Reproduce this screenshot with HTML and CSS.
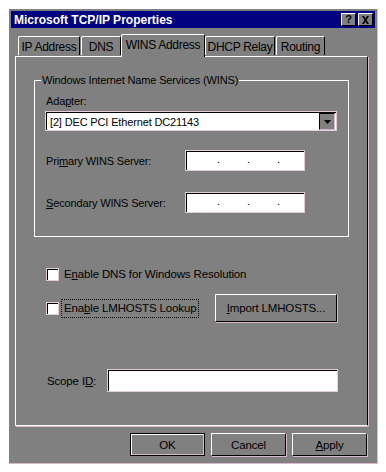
FILE: index.html
```html
<!DOCTYPE html>
<html lang="en">
  <head>
    <meta charset="UTF-8" />
    <title>Microsoft TCP/IP Properties</title>
    <link rel="stylesheet" href="styles.css">
  </head>
  <body>
    <div class="window">
      <div class="titlebar">
        <span class="title">Microsoft TCP/IP Properties</span>
        <div class="caption-btns">
          <span class="cap-btn">?</span>
          <span class="cap-btn">
            <svg width="9" height="8" viewBox="0 0 9 8">
              <path d="M1 0h2l1.5 2.5L6 0h2L5.5 4 8 8H6L4.5 5.5 3 8H1l2.5-4z" fill="#000" />
            </svg>
          </span>
        </div>
      </div>

      <div class="tabs">
        <div class="tab tab-ip">IP Address</div>
        <div class="tab tab-dns">DNS</div>
        <div class="tab tab-wins active">WINS Address</div>
        <div class="tab tab-dhcp">DHCP Relay</div>
        <div class="tab tab-routing">Routing</div>
      </div>

      <div class="panel">
        <div class="group">
          <span class="legend">Windows Internet Name Services (WINS)</span>
          <div class="field-label">Ada<u>p</u>ter:</div>
          <div class="select">
            <span class="select-text">[2] DEC PCI Ethernet DC21143</span>
            <span class="drop-btn">
              <svg width="7" height="4" viewBox="0 0 7 4">
                <path d="M0 0h7L3.5 4z" fill="#000" />
              </svg>
            </span>
          </div>
          <div class="server-row first">
            <span class="server-label">Pri<u>m</u>ary WINS Server:</span>
            <div class="ip-box">
              <span class="dot">.</span><span class="dot">.</span><span class="dot">.</span>
            </div>
          </div>
          <div class="server-row">
            <span class="server-label"><u>S</u>econdary WINS Server:</span>
            <div class="ip-box">
              <span class="dot">.</span><span class="dot">.</span><span class="dot">.</span>
            </div>
          </div>
        </div>

        <div class="check-row dns-row">
          <span class="checkbox"></span>
          <span class="check-label">E<u>n</u>able DNS for Windows Resolution</span>
        </div>
        <div class="check-row lmhosts-row">
          <div class="check-cell">
            <span class="checkbox"></span>
            <span class="check-label focus">Ena<u>b</u>le LMHOSTS Lookup</span>
          </div>
          <span class="btn import-btn"><u>I</u>mport LMHOSTS...</span>
        </div>

        <div class="scope-row">
          <span class="scope-label">Scope I<u>D</u>:</span>
          <div class="scope-box"></div>
        </div>
      </div>

      <div class="footer">
        <span class="btn footer-btn default">OK</span>
        <span class="btn footer-btn">Cancel</span>
        <span class="btn footer-btn"><u>A</u>pply</span>
      </div>
    </div>
  </body>
</html>
```

FILE: styles.css
```css
body {
  margin: 0;
  background: #fff;
  font-family: "Liberation Sans", Arial, sans-serif;
  font-size: 11px;
  letter-spacing: -0.15px;
  color: #000;
}
u {
  text-decoration: underline;
  text-underline-offset: 1px;
}
.window {
  margin: 9px 0 0 9px;
  width: 369px;
  height: 455px;
  box-sizing: border-box;
  background: #808080;
  border-right: 1px solid #d8b8cc;
  border-bottom: 1px solid #d8b8cc;
  display: flex;
  flex-direction: column;
}
.titlebar {
  margin: 2px 2px 0 2px;
  height: 17px;
  background: #000080;
  display: flex;
  align-items: center;
  justify-content: space-between;
  padding: 0 2px 0 3px;
}
.title {
  color: #fff;
  font-weight: bold;
  font-size: 12px;
  letter-spacing: 0;
}
.caption-btns {
  display: flex;
  gap: 2px;
}
.cap-btn {
  width: 15px;
  height: 13px;
  box-sizing: border-box;
  background: #808080;
  border-top: 1px solid #fff;
  border-left: 1px solid #fff;
  border-right: 1px solid #000;
  border-bottom: 1px solid #000;
  display: flex;
  align-items: center;
  justify-content: center;
  font-weight: bold;
  font-size: 11px;
  line-height: 1;
}
.tabs {
  margin: 6px 0 0 9px;
  height: 22px;
  display: flex;
  align-items: flex-end;
  position: relative;
  z-index: 1;
}
.tab {
  height: 19px;
  box-sizing: border-box;
  border-top: 1px solid #fff;
  border-left: 1px solid #fff;
  border-right: 1px solid #000;
  border-radius: 2px 2px 0 0;
  font-size: 12px;
  letter-spacing: -0.3px;
  display: flex;
  align-items: center;
  justify-content: center;
  padding-top: 2px;
  margin-bottom: 1px;
}
.tab-ip { width: 62px; }
.tab-dns { width: 40px; margin-left: 1px; }
.tab-wins { width: 84px; }
.tab-dhcp { width: 70px; }
.tab-routing { width: 49px; margin-left: 1px; }
.tab.active {
  height: 23px;
  margin-bottom: -1px;
  background: #808080;
  padding-top: 0;
  padding-bottom: 3px;
}
.panel {
  margin-left: 6px;
  width: 353px;
  height: 370px;
  box-sizing: border-box;
  border-top: 1px solid #fff;
  border-left: 1px solid #fff;
  border-right: 1px solid #000;
  border-bottom: 1px solid #fff;
  box-shadow: 1px 1px 0 #d8b8cc;
  padding: 23px 0 0 18px;
  display: flex;
  flex-direction: column;
}
.group {
  position: relative;
  width: 315px;
  height: 157px;
  box-sizing: border-box;
  border: 1px solid #fff;
  padding: 14px 0 0 10px;
}
.legend {
  position: absolute;
  top: -7px;
  left: 6px;
  padding: 0 1px;
  background: #808080;
  line-height: 13px;
}
.field-label {
  line-height: 13px;
  margin-left: 1px;
}
.select {
  margin-top: 3px;
  width: 292px;
  height: 20px;
  box-sizing: border-box;
  background: #fff;
  border: 1px solid #e4ccdc;
  box-shadow: inset 1px 1px 0 #000;
  display: flex;
  align-items: center;
  justify-content: space-between;
  padding: 1px 1px 0 4px;
}
.drop-btn {
  width: 16px;
  height: 17px;
  box-sizing: border-box;
  background: #808080;
  border: 1px solid #000;
  border-right-color: #d8b8cc;
  border-bottom-color: #d8b8cc;
  display: flex;
  align-items: center;
  justify-content: center;
}
.server-row {
  display: flex;
  align-items: center;
  margin-top: 21px;
}
.server-row.first {
  margin-top: 19px;
}
.server-label {
  width: 139px;
  margin-left: 1px;
}
.ip-box {
  width: 120px;
  height: 21px;
  box-sizing: border-box;
  background: #fff;
  border: 1px solid #e4ccdc;
  box-shadow: inset 1px 1px 0 #000;
  display: flex;
  padding: 2px 0 0 31px;
  gap: 28px;
}
.dot {
  width: 2px;
}
.check-row {
  display: flex;
  align-items: center;
  margin-left: 12px;
}
.dns-row {
  margin-top: 30px;
}
.lmhosts-row {
  margin-top: 12px;
  height: 28px;
}
.check-cell {
  width: 169px;
  display: flex;
  align-items: center;
}
.checkbox {
  width: 13px;
  height: 13px;
  box-sizing: border-box;
  background: #fff;
  border: 1px solid #e4ccdc;
  box-shadow: inset 1px 1px 0 #000;
}
.check-label {
  margin-left: 5px;
  font-size: 11.5px;
  line-height: 15px;
}
.check-label.focus {
  margin-left: 4px;
  padding: 0 1px;
  outline: 1px dotted #000;
  outline-offset: 1px;
}
.btn {
  box-sizing: border-box;
  background: #808080;
  border-top: 1px solid #fff;
  border-left: 1px solid #fff;
  border-right: 1px solid #000;
  border-bottom: 1px solid #000;
  box-shadow: 1px 1px 0 #d8b8cc;
  display: flex;
  align-items: center;
  justify-content: center;
  font-size: 11.5px;
}
.import-btn {
  width: 122px;
  height: 28px;
}
.scope-row {
  display: flex;
  align-items: center;
  margin: 47px 0 0 13px;
}
.scope-label {
  width: 60px;
  font-size: 11.5px;
}
.scope-box {
  width: 231px;
  height: 23px;
  box-sizing: border-box;
  background: #fff;
  border: 1px solid #e4ccdc;
  box-shadow: inset 1px 1px 0 #000;
}
.footer {
  display: flex;
  justify-content: flex-end;
  gap: 6px;
  margin: 7px 10px 0 0;
}
.footer-btn {
  width: 75px;
  height: 23px;
}
.footer-btn.default {
  border: 1px solid #000;
  box-shadow: inset 1px 1px 0 #fff, inset -1px -1px 0 #d8b8cc;
}
```
